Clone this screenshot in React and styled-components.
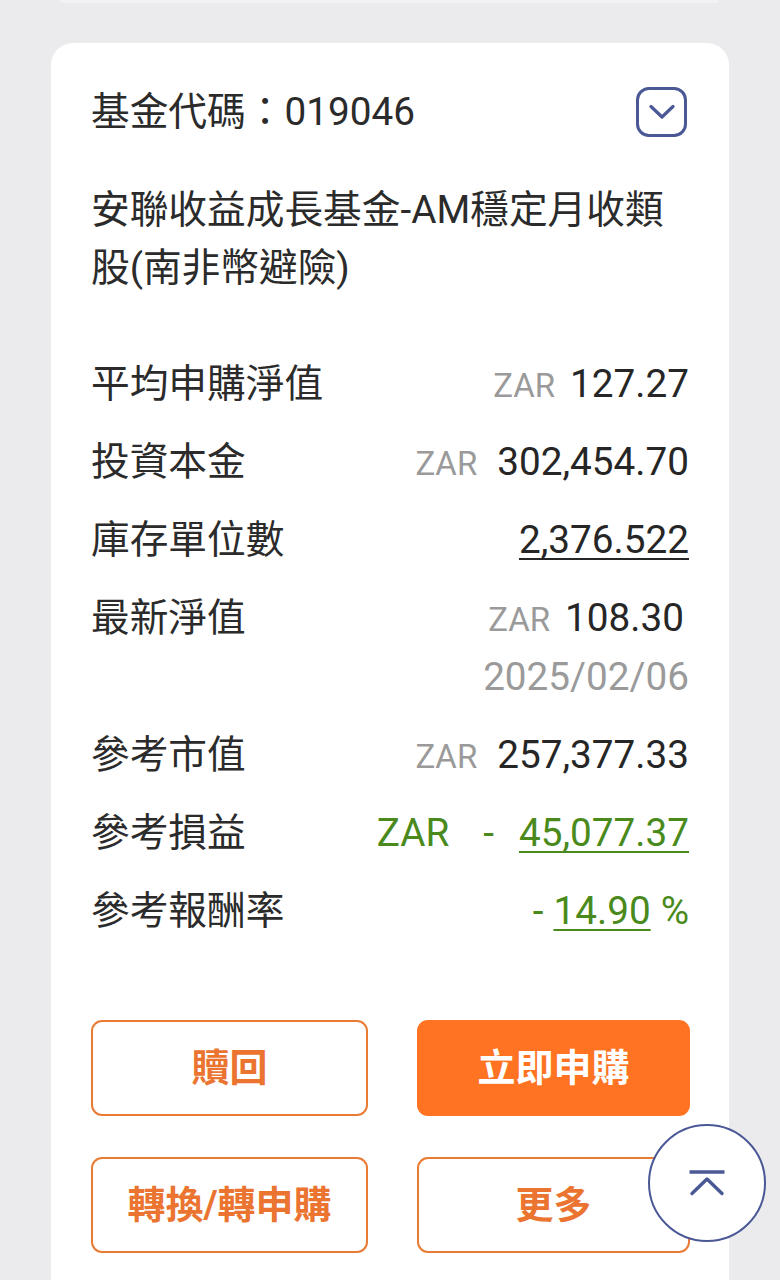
import React from "react";
import styled, { createGlobalStyle } from "styled-components";

const Global = createGlobalStyle`
  html, body { margin: 0; padding: 0; background: #ebebed; }
  body { font-family: Roboto, "Noto Sans CJK TC", sans-serif; color: #2b2b2b; }
  * { box-sizing: border-box; }
`;

const Page = styled.div`
  width: 780px;
  height: 1280px;
  overflow: hidden;
  background: #ebebed;
  display: flex;
  flex-direction: column;
  align-items: flex-start;
`;

const PrevCardEdge = styled.div`
  margin-left: 60px;
  width: 659px;
  height: 3px;
  background: #f2f2f4;
  border-radius: 0 0 14px 14px;
`;

const Card = styled.section`
  margin-top: 40px;
  margin-left: 51px;
  width: 678px;
  flex: 1;
  background: #ffffff;
  border-radius: 22px 22px 0 0;
  padding: 44px 40px 0 40px;
  display: flex;
  flex-direction: column;
`;

const Header = styled.div`
  display: flex;
  align-items: center;
  justify-content: space-between;
  height: 49px;
  padding-right: 2px;
`;

const Code = styled.div`
  font-size: 38.7px;
  line-height: 49px;
  color: #2b2b2b;
`;

const ToggleButton = styled.button`
  width: 51px;
  height: 50px;
  border: 3px solid #4a5896;
  border-radius: 13px;
  background: #fff;
  display: flex;
  align-items: center;
  justify-content: center;
  padding: 0;
`;

const Title = styled.h2`
  margin: 45px 0 0 0;
  font-weight: 400;
  font-size: 38.7px;
  line-height: 58px;
  color: #2b2b2b;
`;

const Rows = styled.div`
  margin-top: 48px;
  display: flex;
  flex-direction: column;
`;

const Row = styled.div`
  display: flex;
  justify-content: space-between;
  align-items: flex-start;
  padding: 16px 0;
`;

const Label = styled.div`
  height: 46px;
  display: flex;
  align-items: center;
  font-size: 38.7px;
  line-height: 46px;
  color: #2b2b2b;
`;

const ValueCol = styled.div`
  display: flex;
  flex-direction: column;
  align-items: flex-end;
  row-gap: 13px;
`;

const Value = styled.div`
  height: 46px;
  display: flex;
  align-items: baseline;
  font-size: 38.7px;
  line-height: 46px;
  color: ${(p) => (p.$tone === "green" ? "#4a8a1c" : p.$tone === "gray" ? "#9a9a9a" : "#262626")};
  padding-right: ${(p) => p.$pr || 0}px;
  white-space: pre;
`;

const Currency = styled.span`
  font-size: ${(p) => (p.$big ? 38.7 : 33)}px;
  color: ${(p) => (p.$green ? "#4a8a1c" : "#9a9a9a")};
  margin-right: ${(p) => (p.$big ? 0 : p.$gap || 15)}px;
`;

const Dash = styled.span`
  margin-left: ${(p) => p.$ml || 0}px;
  margin-right: ${(p) => p.$mr || 0}px;
`;

const Link = styled.span`
  text-decoration: underline;
  text-decoration-thickness: 2px;
  text-underline-offset: 5px;
`;

const Buttons = styled.div`
  margin-top: 70px;
  display: grid;
  grid-template-columns: 277px 273px;
  column-gap: 49px;
  row-gap: 41px;
`;

const ActionButton = styled.button`
  height: 96px;
  border-radius: 11px;
  border: 2px solid ${(p) => (p.$primary ? "#ff7322" : "#ea7b35")};
  background: ${(p) => (p.$primary ? "#ff7322" : "#ffffff")};
  color: ${(p) => (p.$primary ? "#ffffff" : "#ea7430")};
  font-family: Roboto, "Noto Sans CJK TC", sans-serif;
  font-size: 38px;
  font-weight: 700;
  display: flex;
  align-items: center;
  justify-content: center;
  padding: 0 0 7px 0;
`;

const ScrollTop = styled.button`
  position: fixed;
  left: 648px;
  top: 1124px;
  width: 118px;
  height: 118px;
  border-radius: 50%;
  border: 2px solid #4a5896;
  background: #ffffff;
  display: flex;
  align-items: center;
  justify-content: center;
  padding: 0;
`;

const ChevronDown = () => (
  <svg width="26" height="16" viewBox="0 0 26 16" fill="none">
    <path d="M2 2.5 L13 13 L24 2.5" stroke="#4a5896" strokeWidth="3.2" strokeLinecap="round" strokeLinejoin="round" />
  </svg>
);

const TopIcon = () => (
  <svg width="36" height="26" viewBox="0 0 36 26" fill="none">
    <path d="M0.5 2 H35.5" stroke="#4a5896" strokeWidth="3.6" />
    <path d="M3 23.5 L18 9 L33 23.5" stroke="#4a5896" strokeWidth="3.4" strokeLinecap="round" strokeLinejoin="round" />
  </svg>
);

export default function App() {
  return (
    <Page>
      <Global />
      <PrevCardEdge />
      <Card>
        <Header>
          <Code>基金代碼：019046</Code>
          <ToggleButton aria-label="展開">
            <ChevronDown />
          </ToggleButton>
        </Header>
        <Title>
          安聯收益成長基金-AM穩定月收類
          <br />
          股(南非幣避險)
        </Title>
        <Rows>
          <Row>
            <Label>平均申購淨值</Label>
            <Value>
              <Currency>ZAR</Currency>127.27
            </Value>
          </Row>
          <Row>
            <Label>投資本金</Label>
            <Value>
              <Currency $gap={20}>ZAR</Currency>302,454.70
            </Value>
          </Row>
          <Row>
            <Label>庫存單位數</Label>
            <Value>
              <Link>2,376.522</Link>
            </Value>
          </Row>
          <Row>
            <Label>最新淨值</Label>
            <ValueCol>
              <Value $pr={5}>
                <Currency>ZAR</Currency>108.30
              </Value>
              <Value $tone="gray">2025/02/06</Value>
            </ValueCol>
          </Row>
          <Row>
            <Label>參考市值</Label>
            <Value>
              <Currency $gap={20}>ZAR</Currency>257,377.33
            </Value>
          </Row>
          <Row>
            <Label>參考損益</Label>
            <Value $tone="green">
              <Currency $big $green>ZAR</Currency>
              <Dash $ml={34} $mr={25}>-</Dash>
              <Link>45,077.37</Link>
            </Value>
          </Row>
          <Row>
            <Label>參考報酬率</Label>
            <Value $tone="green">
              <Dash $mr={10}>-</Dash>
              <Link>14.90</Link>
              <Dash $ml={10}>%</Dash>
            </Value>
          </Row>
        </Rows>
        <Buttons>
          <ActionButton>贖回</ActionButton>
          <ActionButton $primary>立即申購</ActionButton>
          <ActionButton>轉換/轉申購</ActionButton>
          <ActionButton>更多</ActionButton>
        </Buttons>
      </Card>
      <ScrollTop aria-label="回到頂部">
        <TopIcon />
      </ScrollTop>
    </Page>
  );
}
